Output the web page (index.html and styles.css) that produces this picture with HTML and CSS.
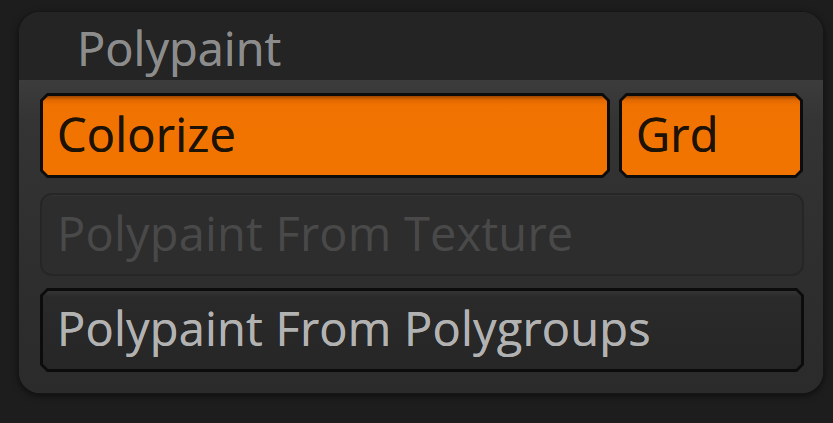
FILE: index.html
```html
<!DOCTYPE html>
<html>
<head>
<meta charset="utf-8">
<link rel="stylesheet" href="styles.css">
</head>
<body>
<div class="panel">
  <div class="panel-header">Polypaint</div>
  <div class="panel-body">
    <div class="row">
      <div class="btn btn-on btn-wide"><span class="btn-face">Colorize</span></div>
      <div class="btn btn-on btn-small"><span class="btn-face">Grd</span></div>
    </div>
    <div class="btn-disabled">Polypaint From Texture</div>
    <div class="btn btn-off"><span class="btn-face">Polypaint From Polygroups</span></div>
  </div>
</div>
</body>
</html>
```

FILE: styles.css
```css
html, body {
  margin: 0;
  padding: 0;
  background: #1d1d1d;
  width: 833px;
  height: 423px;
  overflow: hidden;
  font-family: "Open Sans", "Noto Sans", sans-serif;
}

.panel {
  margin: 11px 0 0 18px;
  width: 806px;
  height: 383px;
  box-sizing: border-box;
  border: 1px solid #161616;
  border-radius: 22px;
  overflow: hidden;
  background: #2c2c2c;
  display: flex;
  flex-direction: column;
  box-shadow: 0 2px 6px rgba(0,0,0,0.5);
}

.panel-header {
  height: 68px;
  flex: none;
  box-sizing: border-box;
  background: #242424;
  color: #8c8c8c;
  font-size: 47px;
  line-height: 47px;
  padding: 13px 0 0 58px;
  text-shadow: 0 0 0.6px #8c8c8c;
}

.panel-body {
  flex: 1;
  background: linear-gradient(#3c3c3c 0, #343434 40px, #2e2e2e 60%, #2b2b2b 100%);
  padding: 13px 19px 0 21px;
  display: flex;
  flex-direction: column;
}

.row {
  display: flex;
  gap: 9px;
  height: 85px;
}

.btn {
  background: #0c0c0c;
  display: flex;
  padding: 3px;
  box-sizing: border-box;
  clip-path: polygon(7px 0, calc(100% - 7px) 0, 100% 7px, 100% calc(100% - 7px), calc(100% - 7px) 100%, 7px 100%, 0 calc(100% - 7px), 0 7px);
}

.btn-face {
  flex: 1;
  display: flex;
  align-items: center;
  padding: 0 0 3px 14px;
  font-size: 47px;
  line-height: 1;
  letter-spacing: 0.2px;
  clip-path: polygon(5px 0, calc(100% - 5px) 0, 100% 5px, 100% calc(100% - 5px), calc(100% - 5px) 100%, 5px 100%, 0 calc(100% - 5px), 0 5px);
}

.btn-wide { width: 570px; }
.btn-small { width: 184px; }

.btn-on .btn-face {
  background: linear-gradient(#9c4600 0, #e06800 4px, #f07200 9px, #f27400 100%);
  color: #1c1206;
  text-shadow: 0 0 0.6px #1c1206;
}

.btn-disabled {
  margin-top: 15px;
  height: 83px;
  box-sizing: border-box;
  border: 2px solid #262626;
  border-radius: 12px;
  background: #2d2d2d;
  color: #494949;
  font-size: 47px;
  line-height: 1;
  letter-spacing: 0.2px;
  display: flex;
  align-items: center;
  padding: 0 0 3px 15px;
  box-shadow: inset 0 1px 0 #343434;
}

.btn-off {
  margin-top: 12px;
  height: 84px;
}

.btn-off .btn-face {
  background: linear-gradient(#343434 0, #2a2a2a 6px, #262626 100%);
  color: #b2b2b2;
  text-shadow: 0 0 0.6px #b2b2b2;
}
```
